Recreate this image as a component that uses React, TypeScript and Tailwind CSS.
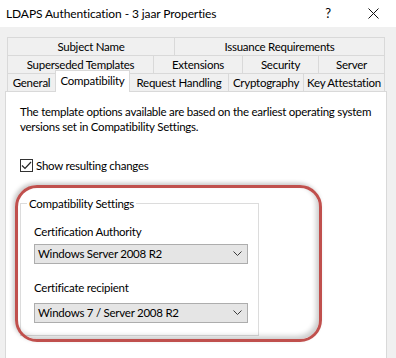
import { ReactNode } from "react";

// Small pieces
const Tab = ({
  children,
  className = "",
}: {
  children: ReactNode;
  className?: string;
}) => (
  <div
    className={`flex items-center justify-center whitespace-nowrap border-l border-t border-[#d9d9d9] bg-[#f0f0f0] text-[11.5px] leading-none text-black ${className}`}
  >
    {children}
  </div>
);

const Chevron = () => (
  <svg width="9" height="6" viewBox="0 0 9 6" className="mr-[5px]">
    <path d="M0.5 0.5 L4.5 4.5 L8.5 0.5" fill="none" stroke="#3a3a3a" strokeWidth="1" />
  </svg>
);

const Select = ({ value }: { value: string }) => (
  <div className="flex h-[20px] w-[214px] items-center justify-between border border-[#adadad] bg-[#e5e5e5] pl-[3px] text-[11.5px] text-black">
    <span>{value}</span>
    <Chevron />
  </div>
);

const App = () => {
  return (
    <div className="relative h-[358px] w-[396px] overflow-hidden bg-[#f0f0f0] font-['Lato',sans-serif] tracking-[-0.25px] text-black">
      {/* Title bar */}
      <div className="flex h-[27px] items-center bg-white pl-[6px] text-[12px] tracking-[-0.1px]">
        <span className="flex-1">LDAPS Authentication - 3 jaar Properties</span>
        <span className="mr-[37px] text-[13px]">?</span>
        <svg width="11" height="11" viewBox="0 0 11 11" className="mr-[17px]">
          <path d="M0.5 0.5 L10.5 10.5 M10.5 0.5 L0.5 10.5" stroke="#111" strokeWidth="1" />
        </svg>
      </div>

      {/* Tabs */}
      <div className="ml-[7px] mt-[10px] flex w-[378px] flex-col">
        <div className="flex h-[18px] border-r border-[#d9d9d9]">
          <Tab className="w-[167px]">Subject Name</Tab>
          <Tab className="flex-1">Issuance Requirements</Tab>
        </div>
        <div className="flex h-[18px] border-r border-[#d9d9d9]">
          <Tab className="w-[146px]">Superseded Templates</Tab>
          <Tab className="w-[89px]">Extensions</Tab>
          <Tab className="w-[76px]">Security</Tab>
          <Tab className="flex-1">Server</Tab>
        </div>
        <div className="flex h-[18px] border-r border-[#d9d9d9]">
          <Tab className="w-[48px]">General</Tab>
          <div className="relative z-10 -mt-[3px] flex h-[22px] w-[75px] items-start justify-center border-x border-t border-[#d9d9d9] bg-white pt-[4px] text-[11.5px] leading-none">
            Compatibility
          </div>
          <Tab className="w-[98px] !border-l-0">Request Handling</Tab>
          <Tab className="w-[75px]">Cryptography</Tab>
          <Tab className="flex-1">Key Attestation</Tab>
        </div>
      </div>

      {/* Page */}
      <div className="ml-[5px] h-[280px] w-[382px] border border-[#d9d9d9] bg-white px-[14px] pt-[12px]">
        <p className="text-[11.5px] leading-[15px]">
          The template options available are based on the earliest operating system versions
          set in Compatibility Settings.
        </p>

        <label className="mt-[24px] flex items-center gap-[3px] text-[11.5px] leading-[15px]">
          <span className="flex h-[13px] w-[13px] items-center justify-center border border-[#333] bg-white">
            <svg width="11" height="9" viewBox="0 0 11 9">
              <path d="M1 4.5 L4 7.5 L10 1" fill="none" stroke="#222" strokeWidth="1.2" />
            </svg>
          </span>
          Show resulting changes
        </label>

        <fieldset className="mt-[23px] h-[140px] w-[239px] border border-[#dcdcdc]">
          <legend className="ml-[6px] px-[2px] text-[11.5px] leading-[15px]">
            Compatibility Settings
          </legend>
          <div className="pl-[13px]">
            <div className="mt-[13px] text-[11.5px] leading-[15px]">Certification Authority</div>
            <div className="mt-[5px]">
              <Select value="Windows Server 2008 R2" />
            </div>
            <div className="mt-[16px] text-[11.5px] leading-[15px]">Certificate recipient</div>
            <div className="mt-[8px]">
              <Select value="Windows 7 / Server 2008 R2" />
            </div>
          </div>
        </fieldset>
      </div>

      {/* Highlight annotation */}
      <div className="pointer-events-none absolute left-[15px] top-[185px] h-[157px] w-[307px] rounded-[22px] border-[3px] border-[#c0504d] shadow-[-2px_-2px_4px_rgba(0,0,0,0.22),inset_-3px_-3px_5px_rgba(0,0,0,0.2)]" />
    </div>
  );
};

export default App;
